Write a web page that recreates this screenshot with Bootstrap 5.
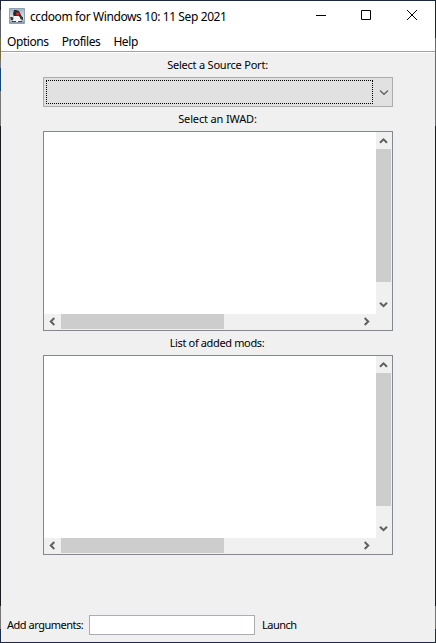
<!DOCTYPE html>
<html lang="en">
<head>
<meta charset="utf-8">
<meta name="viewport" content="width=device-width, initial-scale=1">
<title>ccdoom for Windows 10: 11 Sep 2021</title>
<link href="https://cdn.jsdelivr.net/npm/bootstrap@5.3.0/dist/css/bootstrap.min.css" rel="stylesheet">
<style>
body{width:436px;height:643px;overflow:hidden;font:11px/14px "Noto Sans","Open Sans",sans-serif;color:#000;
background:linear-gradient(#1b2430 0 10px,#5c6169 10px 38px,#776b49 38px 60px,#77797d 60px 68px,#164775 68px 91px,#777 91px 126px,#181a1d 126px 606px,#777 606px 629px,#1b2d48 629px) left/1px 100% no-repeat,
linear-gradient(#1b2430 0 38px,#6a6a6a 38px 126px,#181a1d 126px 606px,#777 606px 629px,#1b2d48 629px) right/1px 100% no-repeat,#1b2a40}
.win{margin:1px;width:434px;height:641px;background:#f0f0f0}
.titlebar{height:30px;padding-left:8px;background:#fff;font-size:12px}
.caption-btn{width:45px;height:30px;padding:0;border:0;background:none}
.titlebar .caption-btn:last-child{width:46px}
.title-text{margin-left:5px;padding-top:1px;letter-spacing:-.39px}
.menus{height:20px;padding-left:6px;gap:13px;background:#fff;font-size:12px;line-height:22px;letter-spacing:-.42px}
.sep{height:2px;background:#a0a0a0;border-bottom:1px solid #fff}
.cap{height:24px;line-height:24px;letter-spacing:-.22px;padding-right:1px}
.cap-iwad{letter-spacing:-.15px}
.cap-mods{letter-spacing:-.36px;padding-right:2px}
.combo{width:350px;height:30px;padding:2px;background:#e1e1e1;border:1px solid #adadad}
.focus-box{flex:none;width:327px;height:24px;border:1px dotted #000}
.combo svg{margin-left:4px}
.pane{width:350px;height:200px;display:grid;grid-template:182px 16px/332px 16px;background:#f0f0f0;border:1px solid #828790}
.thumb{background:#cdcdcd}
.vbar .thumb{width:15px;height:133px}
.hbar .thumb{width:163px;height:15px}
.arrow{width:17px;height:15px}
.vbar .arrow{width:15px;height:17px}
.vbar .mt-auto{margin-bottom:1px}
.hbar .ms-auto{margin-right:1px}
svg{display:block;flex:none}
.args{margin-top:60px;height:20px;padding-left:6px}
.args-label{width:76px;letter-spacing:-.48px}
.args input{width:166px;height:20px;margin:0 7px 0 6px;border:1px solid #abadb3;background:#fff;padding:0 3px}
.launch-btn{border:0;background:none;padding:0;letter-spacing:-.5px}
</style>
</head>
<body>
<svg width="0" height="0" class="position-absolute">
<symbol id="up" viewBox="0 0 15 17"><path d="M4 10.8 7.5 7.3 11 10.8" fill="none" stroke="#606060" stroke-width="2"/></symbol>
<symbol id="down" viewBox="0 0 15 17"><path d="M4 6.7 7.5 10.2 11 6.7" fill="none" stroke="#606060" stroke-width="2"/></symbol>
<symbol id="left" viewBox="0 0 17 15"><path d="M10.3 4 6.8 7.5 10.3 11" fill="none" stroke="#606060" stroke-width="2"/></symbol>
<symbol id="right" viewBox="0 0 17 15"><path d="M6.7 4 10.2 7.5 6.7 11" fill="none" stroke="#606060" stroke-width="2"/></symbol>
</svg>
<div class="win d-flex flex-column">
<header class="titlebar d-flex align-items-center">
<svg width="16" height="16" viewBox="0 0 16 16"><defs><linearGradient id="sky" x2="0" y2="1"><stop stop-color="#9cb0c2"/><stop offset=".6" stop-color="#e2e7eb"/><stop offset="1" stop-color="#7890a5"/></linearGradient></defs><path fill="url(#sky)" stroke="#8fa2b3" d="M.5.5h15v15H.5z"/><path fill="#2a2a2a" d="M5 2h2l3 1 2 4 1 2H5L4 6z"/><path fill="#3a3a3a" d="M1 9h2l2 1v2H2zm10-1 3 1v3l-3-1z"/><path fill="#f6f6f6" d="m5 8 5 0 2 4-1 2H5l-1-2z"/><path fill="#444" d="M3 13h4v1H3zm6 0h4v1H9z"/><circle cx="8.8" cy="6" r="1.8" fill="#df2029"/></svg>
<span class="title-text text-nowrap me-auto">ccdoom for Windows 10: 11 Sep 2021</span>
<button class="caption-btn" aria-label="Minimize"><svg width="45" height="30"><path d="M17 14h10v1H17z"/></svg></button>
<button class="caption-btn" aria-label="Maximize"><svg width="45" height="30"><path d="M17.5 9.5h9v9h-9z" fill="none" stroke="#000"/></svg></button>
<button class="caption-btn" aria-label="Close"><svg width="46" height="30"><path d="m18 9 10 10m0-10L18 19" fill="none" stroke="#000"/></svg></button>
</header>
<nav class="menus d-flex"><span>Options</span><span>Profiles</span><span>Help</span></nav>
<div class="sep"></div>
<main class="d-flex flex-column align-items-center">
<label class="cap">Select a Source Port:</label>
<div class="combo d-flex align-items-center" role="combobox" aria-expanded="false" tabindex="0"><div class="focus-box"></div><svg width="14" height="14"><path d="m3 5.5 4 3.8 4-3.8" fill="none" stroke="#606060" stroke-width="1.2"/></svg></div>
<label class="cap cap-iwad">Select an IWAD:</label>
<div class="pane">
<div class="bg-white"></div>
<div class="vbar d-flex flex-column"><svg class="arrow"><use href="#up"/></svg><div class="thumb"></div><svg class="arrow mt-auto"><use href="#down"/></svg></div>
<div class="hbar d-flex"><svg class="arrow"><use href="#left"/></svg><div class="thumb"></div><svg class="arrow ms-auto"><use href="#right"/></svg></div>
</div>
<label class="cap cap-mods">List of added mods:</label>
<div class="pane">
<div class="bg-white"></div>
<div class="vbar d-flex flex-column"><svg class="arrow"><use href="#up"/></svg><div class="thumb"></div><svg class="arrow mt-auto"><use href="#down"/></svg></div>
<div class="hbar d-flex"><svg class="arrow"><use href="#left"/></svg><div class="thumb"></div><svg class="arrow ms-auto"><use href="#right"/></svg></div>
</div>
</main>
<footer class="args d-flex align-items-center"><label for="arguments" class="args-label text-nowrap">Add arguments:</label><input id="arguments" type="text"><button class="launch-btn">Launch</button></footer>
</div>
<script src="https://cdn.jsdelivr.net/npm/bootstrap@5.3.0/dist/js/bootstrap.bundle.min.js"></script>
</body>
</html>
